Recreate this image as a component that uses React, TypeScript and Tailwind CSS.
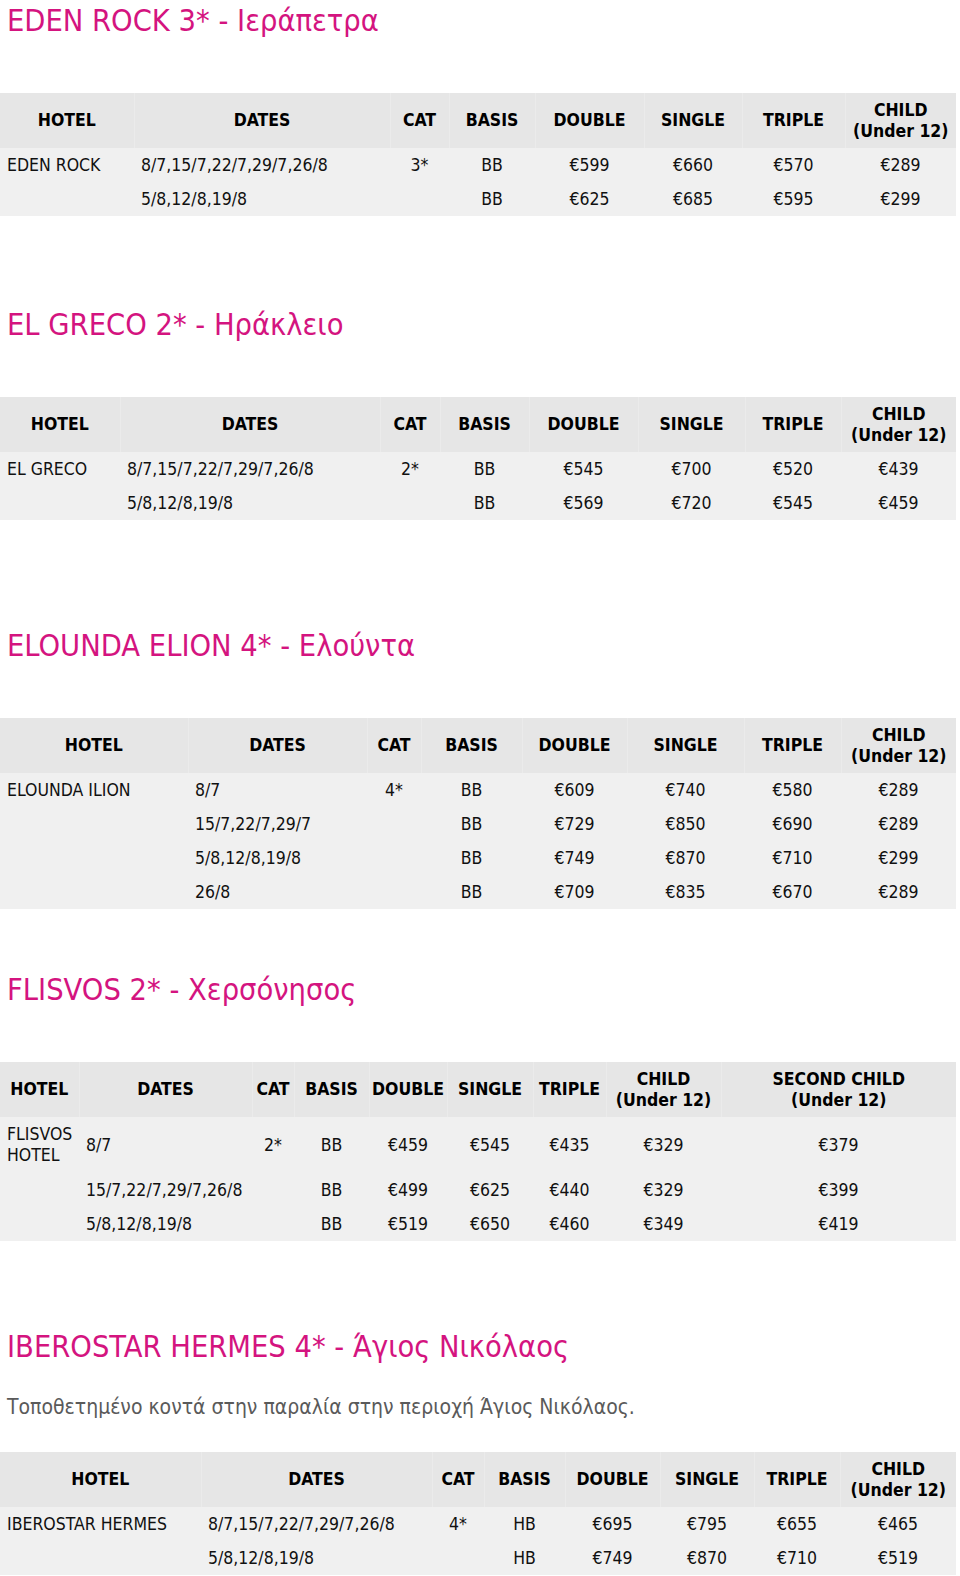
import { Fragment, ReactNode } from "react";

// one price table per hotel, columns sized to the original page
type Row = { cells: string[]; tall?: boolean };

type Section = {
  title: string;
  note?: string;
  gap: string;
  cols: string[];
  heads: ReactNode[];
  rows: Row[];
};

const child = (
  <>
    CHILD
    <br />
    (Under 12)
  </>
);

const secondChild = (
  <>
    SECOND CHILD
    <br />
    (Under 12)
  </>
);

const baseHeads: ReactNode[] = ["HOTEL", "DATES", "CAT", "BASIS", "DOUBLE", "SINGLE", "TRIPLE", child];

const sections: Section[] = [
  {
    title: "EDEN ROCK 3* - Ιεράπετρα",
    gap: "mt-0",
    cols: ["w-[134px]", "w-[256px]", "w-[59px]", "w-[86px]", "w-[109px]", "w-[98px]", "w-[103px]", "w-[111px]"],
    heads: baseHeads,
    rows: [
      { cells: ["EDEN ROCK", "8/7,15/7,22/7,29/7,26/8", "3*", "BB", "€599", "€660", "€570", "€289"] },
      { cells: ["", "5/8,12/8,19/8", "", "BB", "€625", "€685", "€595", "€299"] },
    ],
  },
  {
    title: "EL GRECO 2* - Ηράκλειο",
    gap: "mt-[88px]",
    cols: ["w-[120px]", "w-[260px]", "w-[60px]", "w-[89px]", "w-[109px]", "w-[107px]", "w-[96px]", "w-[115px]"],
    heads: baseHeads,
    rows: [
      { cells: ["EL GRECO", "8/7,15/7,22/7,29/7,26/8", "2*", "BB", "€545", "€700", "€520", "€439"] },
      { cells: ["", "5/8,12/8,19/8", "", "BB", "€569", "€720", "€545", "€459"] },
    ],
  },
  {
    title: "ELOUNDA ELION 4* - Ελούντα",
    gap: "mt-[105px]",
    cols: ["w-[188px]", "w-[179px]", "w-[54px]", "w-[101px]", "w-[105px]", "w-[117px]", "w-[97px]", "w-[115px]"],
    heads: baseHeads,
    rows: [
      { cells: ["ELOUNDA ILION", "8/7", "4*", "BB", "€609", "€740", "€580", "€289"] },
      { cells: ["", "15/7,22/7,29/7", "", "BB", "€729", "€850", "€690", "€289"] },
      { cells: ["", "5/8,12/8,19/8", "", "BB", "€749", "€870", "€710", "€299"] },
      { cells: ["", "26/8", "", "BB", "€709", "€835", "€670", "€289"] },
    ],
  },
  {
    title: "FLISVOS 2* - Χερσόνησος",
    gap: "mt-[60px]",
    cols: ["w-[79px]", "w-[173px]", "w-[42px]", "w-[75px]", "w-[78px]", "w-[86px]", "w-[73px]", "w-[115px]", "w-[235px]"],
    heads: [...baseHeads, secondChild],
    rows: [
      { cells: ["FLISVOS HOTEL", "8/7", "2*", "BB", "€459", "€545", "€435", "€329", "€379"], tall: true },
      { cells: ["", "15/7,22/7,29/7,26/8", "", "BB", "€499", "€625", "€440", "€329", "€399"] },
      { cells: ["", "5/8,12/8,19/8", "", "BB", "€519", "€650", "€460", "€349", "€419"] },
    ],
  },
  {
    title: "IBEROSTAR HERMES 4* - Άγιος Νικόλαος",
    note: "Τοποθετημένο κοντά στην παραλία στην περιοχή Άγιος Νικόλαος.",
    gap: "mt-[85px]",
    cols: ["w-[201px]", "w-[231px]", "w-[52px]", "w-[81px]", "w-[95px]", "w-[94px]", "w-[86px]", "w-[116px]"],
    heads: baseHeads,
    rows: [
      { cells: ["IBEROSTAR HERMES", "8/7,15/7,22/7,29/7,26/8", "4*", "HB", "€695", "€795", "€655", "€465"] },
      { cells: ["", "5/8,12/8,19/8", "", "HB", "€749", "€870", "€710", "€519"] },
    ],
  },
];

function PriceTable({ s }: { s: Section }) {
  return (
    <table className={`${s.note ? "mt-[30px]" : "mt-[51px]"} w-[956px] table-fixed border-collapse`}>
      <colgroup>
        {s.cols.map((c, i) => (
          <col key={i} className={c} />
        ))}
      </colgroup>
      <thead>
        <tr className="h-[55px] bg-[#e6e6e6]">
          {s.heads.map((h, i) => (
            <th
              key={i}
              className={`px-[2px] text-center align-middle text-[17.5px] font-bold leading-[21px] whitespace-nowrap text-black ${
                i > 0 ? "border-l border-[#ebebeb]" : ""
              }`}
            >
              {h}
            </th>
          ))}
        </tr>
      </thead>
      <tbody className="bg-[#f0f0f0]">
        {s.rows.map((r, ri) => (
          <tr key={ri} className={r.tall ? "h-[56px]" : "h-[34px]"}>
            {r.cells.map((c, ci) => (
              <td
                key={ci}
                className={`align-middle text-[17.5px] leading-[21px] text-[#111] ${
                  ci < 2 ? "pl-[7px] text-left" : "text-center"
                }`}
              >
                {c}
              </td>
            ))}
          </tr>
        ))}
      </tbody>
    </table>
  );
}

export default function App() {
  return (
    <div className="w-[960px] bg-white font-['DejaVu_Sans_Condensed','DejaVu_Sans',sans-serif]">
      {sections.map((s, i) => (
        <Fragment key={i}>
          <section className={s.gap}>
            <h2 className="h-[42px] pl-[7px] text-[30.5px] font-normal leading-[42px] text-[#d4147f] whitespace-nowrap">
              {s.title}
            </h2>
            {s.note && (
              <p className="mt-[24px] h-[30px] pl-[7px] text-[21px] leading-[30px] text-[#5a5a5a]">{s.note}</p>
            )}
            <PriceTable s={s} />
          </section>
        </Fragment>
      ))}
    </div>
  );
}
